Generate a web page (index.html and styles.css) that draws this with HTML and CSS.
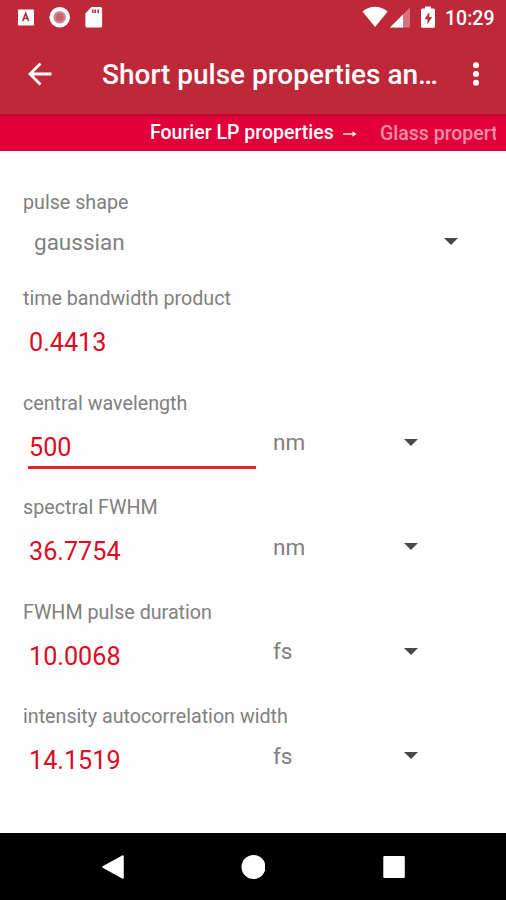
FILE: index.html
```
<!DOCTYPE html>
<html lang="en">
<head>
    <meta charset="UTF-8">
    <title>Short pulse properties</title>
    <link rel="stylesheet" href="styles.css">
</head>
<body>
<div class="screen">
    <div class="status">
        <svg class="notices" width="110" height="36" viewBox="0 0 110 36">
            <rect x="18" y="9.5" width="16" height="16" rx="1" fill="#fff"/>
            <path d="M22.700 21l3-7.500 3 7.500M24 18.500h3.500" fill="none" stroke="#be2838" stroke-width="1.700"/>
            <circle cx="59.700" cy="17.300" r="10.300" fill="#fff"/>
            <circle cx="59.700" cy="17.300" r="6.300" fill="#d58a92"/>
            <circle cx="59.700" cy="17.300" r="4" fill="#c76470"/>
            <path d="M91.500 7H100.500a1.600 1.600 0 0 1 1.600 1.600V26a1.600 1.600 0 0 1-1.600 1.600H87a1.600 1.600 0 0 1-1.600-1.600V13.500z" fill="#fff"/>
            <path d="M92.700 9.500v3.500M95.200 9.500v3.500M98.200 9.500v3.500" stroke="#be2838" stroke-width="1.600"/>
        </svg>
        <svg class="signals" width="80" height="36" viewBox="0 0 80 36">
            <path d="M2.500 11.500C9.500 5.200 20.500 5.200 27.700 11.500L15.100 27z" fill="#fff"/>
            <path d="M50 7.500V27.500H30z" fill="#fff" opacity=".35"/>
            <path d="M43 14.500V27.500H30z" fill="#fff"/>
            <path d="M65 6.500h6v2h2.500a1.500 1.500 0 0 1 1.500 1.500v16.200a1.500 1.500 0 0 1-1.500 1.500h-11a1.500 1.500 0 0 1-1.500-1.500v-16.200a1.500 1.500 0 0 1 1.500-1.500h2.500z" fill="#fff"/>
            <path d="M69.300 12l-4.800 7.200h3v5l4.600-7.200h-2.800z" fill="#be2838"/>
        </svg>
        <span class="clock">10:29</span>
    </div>
    <div class="toolbar">
        <svg class="back" width="24" height="24" viewBox="0 0 24 24">
            <path d="M23.500 12H3M12.500 1.500L2 12l10.500 10.500" fill="none" stroke="#fff" stroke-width="2.800"/>
        </svg>
        <h1>Short pulse properties an…</h1>
        <svg class="more" width="8" height="24" viewBox="0 0 8 24">
            <circle cx="4" cy="3.300" r="3" fill="#fff"/>
            <circle cx="4" cy="12" r="3" fill="#fff"/>
            <circle cx="4" cy="20.700" r="3" fill="#fff"/>
        </svg>
    </div>
    <div class="tabs">
        <span class="current">Fourier LP properties <svg width="16" height="10" viewBox="0 0 16 10"><path d="M0 6h11" stroke="#fff" stroke-width="1.300"/><path d="M9.500 3.200L13.500 6l-4 2.800z" fill="#fff"/></svg></span>
        <span class="next">Glass propert</span>
    </div>

    <div class="form">
        <div class="field shape">
            <label>pulse shape</label>
            <div class="row">
                <div class="select"><span>gaussian</span><i class="arrow"></i></div>
            </div>
        </div>
        <div class="field">
            <label>time bandwidth product</label>
            <div class="row">
                <div class="value">0.4413</div>
            </div>
        </div>
        <div class="field">
            <label>central wavelength</label>
            <div class="row">
                <div class="value focus">500</div>
                <div class="select"><span>nm</span><i class="arrow"></i></div>
            </div>
        </div>
        <div class="field">
            <label>spectral FWHM</label>
            <div class="row">
                <div class="value">36.7754</div>
                <div class="select"><span>nm</span><i class="arrow"></i></div>
            </div>
        </div>
        <div class="field">
            <label>FWHM pulse duration</label>
            <div class="row">
                <div class="value">10.0068</div>
                <div class="select"><span>fs</span><i class="arrow"></i></div>
            </div>
        </div>
        <div class="field">
            <label>intensity autocorrelation width</label>
            <div class="row">
                <div class="value">14.1519</div>
                <div class="select"><span>fs</span><i class="arrow"></i></div>
            </div>
        </div>
    </div>

    <div class="navbar">
        <svg width="24" height="26" viewBox="0 0 24 26">
            <path d="M22 2v22L2 13z" fill="#fff" stroke="#fff" stroke-width="1.500" stroke-linejoin="round"/>
        </svg>
        <svg width="24" height="26" viewBox="0 0 24 26">
            <circle cx="12.500" cy="13" r="12" fill="#fff"/>
        </svg>
        <svg width="24" height="26" viewBox="0 0 24 26">
            <rect x="2.300" y="2" width="21.500" height="22" rx="1" fill="#fff"/>
        </svg>
    </div>
</div>
</body>
</html>
```
FILE: styles.css
```
* {
    margin: 0;
    padding: 0;
    box-sizing: border-box;
}

body {
    background-color: #fefefe;
    font-family: Roboto, "Liberation Sans", sans-serif;
}

svg {
    display: block;
    flex: none;
}

.screen {
    display: flex;
    flex-direction: column;
    width: 506px;
    height: 900px;
    overflow: hidden;
}

/* status bar */
.status {
    display: flex;
    height: 36px;
    padding-right: 11px;
    background-color: #be2838;
    color: #fff;
}

.signals {
    margin-left: auto;
}

.clock {
    width: 50px;
    margin-left: 5px;
    font-size: 19.5px;
    font-weight: 500;
    line-height: 37px;
    white-space: nowrap;
}

/* toolbar */
.toolbar {
    display: flex;
    align-items: center;
    height: 78px;
    padding: 0 26px 2px 28px;
    background-color: #be2838;
    color: #fff;
}

.toolbar h1 {
    width: 344px;
    margin-left: 50px;
    padding-top: 2px;
    font-size: 28px;
    font-weight: 500;
    line-height: 40px;
    white-space: nowrap;
}

.more {
    margin-left: auto;
}

.tabs {
    display: flex;
    height: 37px;
    padding: 0 10px 0 150px;
    background: linear-gradient(#bd0634, #e2003b 5px);
    color: #fff;
    font-size: 19.5px;
    font-weight: 500;
    line-height: 39px;
    white-space: nowrap;
}

.tabs .current {
    display: flex;
    align-items: center;
    gap: 9px;
    flex: none;
    width: 230px;
}

.tabs .next {
    flex: 1;
    overflow: hidden;
    color: #f28fa6;
}

/* form */
.form {
    flex: 1;
    padding: 39px 23px 0;
    color: #808080;
}

.field {
    height: 104.5px;
}

.field.shape {
    height: 96px;
}

.field label {
    display: block;
    height: 24px;
    font-size: 19.7px;
    line-height: 25px;
}

.row {
    display: flex;
    align-items: flex-start;
    padding-left: 5px;
}

.value {
    width: 228px;
    height: 54px;
    padding: 18px 0 0 1px;
    border-bottom: 3px solid transparent;
    color: #dc0a24;
    font-size: 25.2px;
    line-height: 30px;
}

.value.focus {
    border-bottom-color: #e02427;
}

.select {
    display: flex;
    align-items: center;
    width: 162px;
    height: 55px;
    padding-left: 17px;
    font-size: 22.5px;
}

.select .arrow {
    margin-left: auto;
    border-top: 7px solid #484848;
    border-left: 7px solid transparent;
    border-right: 7px solid transparent;
}

.shape .select {
    width: 430px;
    padding-left: 6px;
}

/* navigation bar */
.navbar {
    display: flex;
    justify-content: space-between;
    align-items: center;
    height: 67px;
    padding: 0 101px;
    background-color: #000;
}
```
